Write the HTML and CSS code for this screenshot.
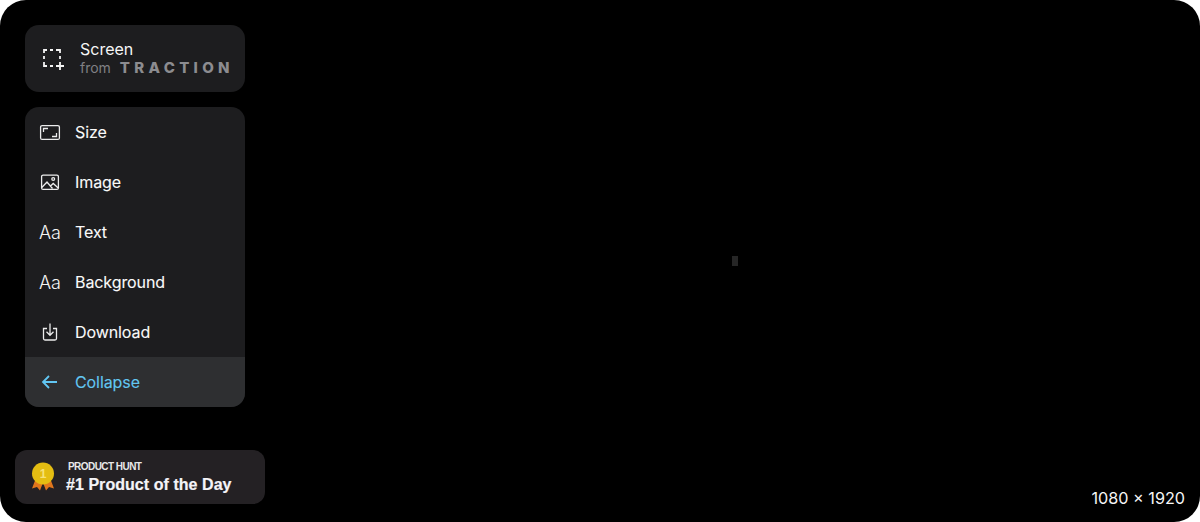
FILE: index.html
```html
<!DOCTYPE html>
<html lang="en">

<head>
	<meta charset="UTF-8">
	<meta name="viewport" content="width=device-width, initial-scale=1.0">
	<title>Screen from Traction</title>
	<link rel="stylesheet" href="styles.css">
</head>

<body>
	<main class="stage">
		<aside class="sidebar">
			<header class="brand">
				<svg class="brandIcon" width="24" height="24" viewBox="0 0 24 24" fill="none" stroke="#f4f4f4" stroke-width="1.800">
					<path d="M3 6V3h3M9 3h3M15 3h4v3M19 9v3M3 9v3M3 15v4h3M9 19h3" />
					<path d="M19 15v8M15 19h8" />
				</svg>
				<div class="brandText">
					<div class="brandName">Screen</div>
					<div class="brandFrom">from <span class="brandLogo">TRACTION</span></div>
				</div>
			</header>

			<nav class="menu">
				<a class="menuItem">
					<svg class="menuIcon" width="22" height="22" viewBox="0 0 22 22" fill="none" stroke="#ececec" stroke-width="1.300">
						<rect x="1.600" y="4.600" width="18.800" height="13.800" rx="1.500" />
						<path d="M4.500 11V7.500H9M17.500 12v3.500H13" />
					</svg>
					Size
				</a>
				<a class="menuItem">
					<svg class="menuIcon" width="22" height="22" viewBox="0 0 22 22" fill="none" stroke="#ececec" stroke-width="1.300">
						<rect x="2.600" y="4.100" width="16.800" height="14.300" rx="1.500" />
						<circle cx="14.200" cy="8" r="1.400" />
						<path d="M2.800 16.500 8 11l5.500 6.500M11.500 15l2.700-2.500 5 4.500" />
					</svg>
					Image
				</a>
				<a class="menuItem">
					<span class="menuIcon glyph">Aa</span>
					Text
				</a>
				<a class="menuItem">
					<span class="menuIcon glyph">Aa</span>
					Background
				</a>
				<a class="menuItem">
					<svg class="menuIcon" width="22" height="22" viewBox="0 0 22 22" fill="none" stroke="#ececec" stroke-width="1.300">
						<path d="M8 7.500H4.500v10a1.500 1.500 0 0 0 1.500 1.500h10a1.500 1.500 0 0 0 1.500-1.500v-10H14" />
						<path d="M11 2.500V14M7.500 10.800 11 14.300l3.500-3.500" />
					</svg>
					Download
				</a>
				<a class="menuItem active">
					<svg class="menuIcon" width="22" height="22" viewBox="0 0 22 22" fill="none" stroke="#62c6f2" stroke-width="1.800">
						<path d="M18 11H4M10 5l-6 6 6 6" />
					</svg>
					Collapse
				</a>
			</nav>
		</aside>

		<div class="badge">
			<svg class="medal" width="26" height="30" viewBox="0 0 26 30">
				<path d="M6 16 2 26.500l5-1.500 3 3.500L14 18z" fill="#e0761d" />
				<path d="M20 16l4 10.500-5-1.500-3 3.500L12 18z" fill="#e0761d" />
				<circle cx="13" cy="11.500" r="11" fill="#e4bd12" />
				<text class="medalNum" x="13" y="15.500" text-anchor="middle">1</text>
			</svg>
			<div>
				<div class="badgeLabel">PRODUCT HUNT</div>
				<div class="badgeTitle">#1 Product of the Day</div>
			</div>
		</div>

		<div class="preview"></div>
		<div class="dimensions">1080 × 1920</div>
	</main>
</body>

</html>
```

FILE: styles.css
```css
* {
	box-sizing: border-box;
}

body {
	margin: 0;
	background: #fff;
	font-family: Inter, "Liberation Sans", sans-serif;
}

.stage {
	position: relative;
	display: flex;
	flex-direction: column;
	align-items: flex-start;
	width: 1200px;
	height: 522px;
	padding: 25px 15px 18px;
	background: #000;
	border-radius: 26px;
	overflow: hidden;
}

.sidebar {
	width: 220px;
	margin-left: 10px;
}

.brand {
	display: flex;
	align-items: center;
	gap: 15px;
	height: 67px;
	padding-left: 16px;
	background: #1d1d1f;
	border-radius: 14px;
}

.brandIcon {
	flex-shrink: 0;
}

.brandText {
	margin-bottom: 1px;
}

.brandName {
	margin-bottom: 1px;
	font-size: 16px;
	line-height: 18px;
	color: #f6f6f6;
}

.brandFrom {
	font-size: 14px;
	line-height: 18px;
	color: #808084;
	white-space: nowrap;
}

.brandLogo {
	margin-left: 5px;
	font-size: 15px;
	font-weight: 800;
	letter-spacing: 4.300px;
	color: #8c8c90;
}

.menu {
	margin-top: 15px;
	background: #1d1d1f;
	border-radius: 14px;
	overflow: hidden;
}

.menuItem {
	display: flex;
	align-items: center;
	gap: 14px;
	height: 50px;
	padding-left: 14px;
	font-size: 16px;
	letter-spacing: -0.005em;
	color: #fafafa;
	-webkit-text-stroke: 0.100px currentColor;
}

.menuItem.active {
	background: #2e2f31;
	color: #62c6f2;
}

.menuIcon {
	flex-shrink: 0;
	width: 22px;
}

.glyph {
	font-size: 18px;
	font-weight: 300;
	text-align: center;
	color: #f4f4f4;
	white-space: nowrap;
	letter-spacing: 0;
	-webkit-text-stroke: 0;
}

.badge {
	display: flex;
	align-items: center;
	gap: 12px;
	width: 250px;
	height: 54px;
	margin-top: auto;
	padding-left: 15px;
	background: #242124;
	border-radius: 12px;
	font-family: "Liberation Sans", Arial, sans-serif;
	font-weight: 700;
}

.medal {
	flex-shrink: 0;
	margin-right: -1px;
}

.medalNum {
	font-family: "Liberation Sans", Arial, sans-serif;
	font-size: 12px;
	font-weight: 700;
	fill: #f6e27a;
}

.badgeLabel {
	margin-left: 1px;
	font-size: 10px;
	line-height: 13px;
	letter-spacing: -0.550px;
	color: #e8e8e8;
}

.badgeTitle {
	margin-top: 2px;
	margin-left: -1px;
	font-size: 16px;
	line-height: 20px;
	letter-spacing: 0.050px;
	color: #f4f4f8;
	-webkit-text-stroke: 0.200px currentColor;
}

.preview {
	position: absolute;
	left: 732px;
	top: 256px;
	width: 6px;
	height: 10px;
	background: #262626;
}

.dimensions {
	position: absolute;
	right: 15px;
	bottom: 14px;
	font-size: 16.200px;
	line-height: 20px;
	color: #f6f6f6;
}
```
